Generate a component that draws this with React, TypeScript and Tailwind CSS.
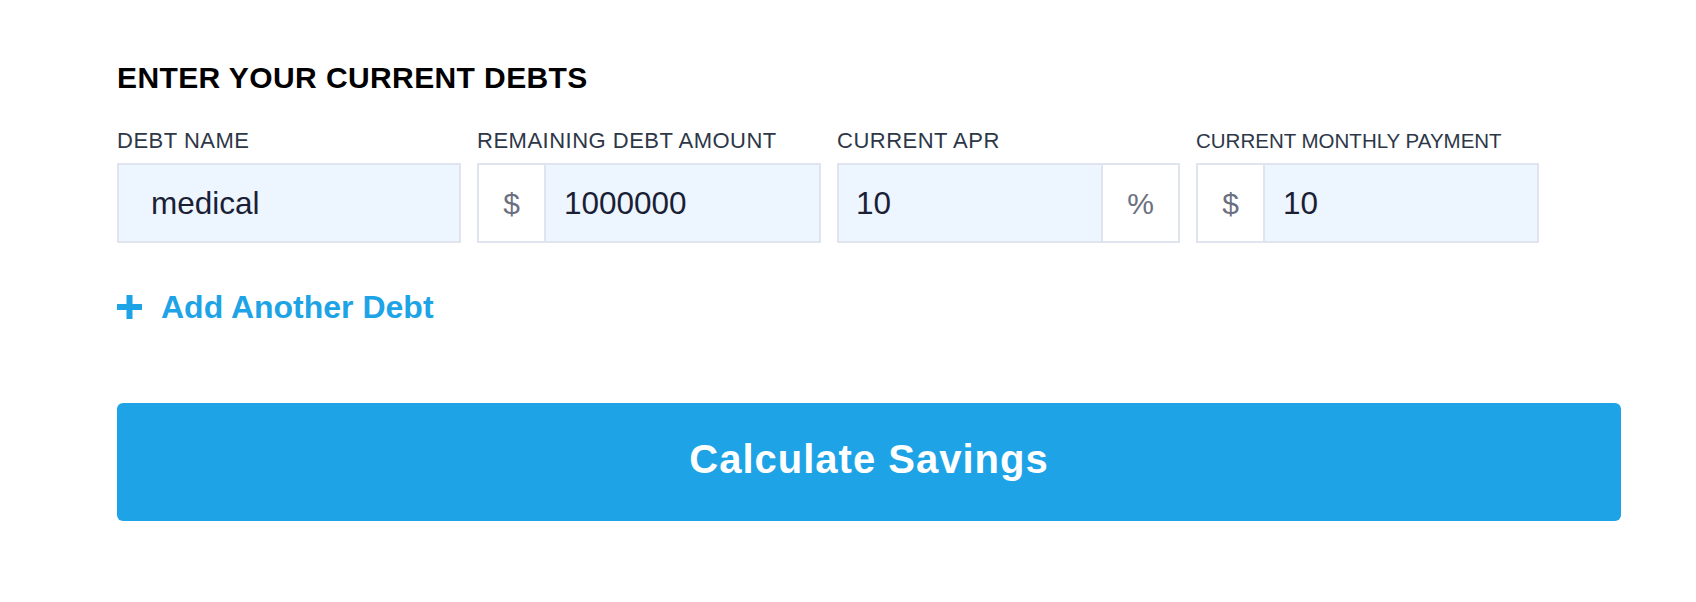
import React from "react";

const font = { fontFamily: '"Liberation Sans", Arial, Helvetica, sans-serif' };

function Label({ children, narrow }: { children: React.ReactNode; narrow?: boolean }) {
  return (
    <div
      className={
        narrow
          ? "h-[22px] flex items-center text-[20.5px] leading-none text-[#2d3748] whitespace-nowrap"
          : "h-[22px] text-[22px] leading-none tracking-[0.5px] text-[#2d3748] whitespace-nowrap"
      }
    >
      {children}
    </div>
  );
}

function Box({ children }: { children: React.ReactNode }) {
  return (
    <div className="mt-[11px] h-[80px] border-2 border-[#dfe4ef] flex bg-white">{children}</div>
  );
}

function Field({ value, pad }: { value: string; pad: string }) {
  return (
    <input
      defaultValue={value}
      className={`flex-1 min-w-0 h-full bg-[#edf5ff] text-[31.5px] text-[#1a1f36] outline-none ${pad}`}
      style={font}
    />
  );
}

export default function App() {
  return (
    <div className="min-h-screen bg-white pl-[117px] pt-[63px]" style={font}>
      <h2 className="text-[30px] leading-none font-bold tracking-[0.4px] text-black">
        ENTER YOUR CURRENT DEBTS
      </h2>

      <div className="mt-[37px] flex gap-4">
        <div className="w-[344px]">
          <Label>DEBT NAME</Label>
          <Box>
            <Field value="medical" pad="pl-[32px]" />
          </Box>
        </div>

        <div className="w-[344px]">
          <Label>REMAINING DEBT AMOUNT</Label>
          <Box>
            <div className="w-[67px] border-r-2 border-[#dfe4ef] flex items-center justify-center text-[30px] text-[#6b7080]">
              $
            </div>
            <Field value="1000000" pad="pl-[18px]" />
          </Box>
        </div>

        <div className="w-[343px]">
          <Label>CURRENT APR</Label>
          <Box>
            <Field value="10" pad="pl-[17px]" />
            <div className="w-[77px] border-l-2 border-[#dfe4ef] flex items-center justify-center text-[30px] text-[#6b7080]">
              %
            </div>
          </Box>
        </div>

        <div className="w-[343px]">
          <Label narrow>CURRENT MONTHLY PAYMENT</Label>
          <Box>
            <div className="w-[67px] border-r-2 border-[#dfe4ef] flex items-center justify-center text-[30px] text-[#6b7080]">
              $
            </div>
            <Field value="10" pad="pl-[18px]" />
          </Box>
        </div>
      </div>

      {/* add row */}
      <button className="mt-[48px] flex items-center gap-[19px] text-[#1ea4e6] cursor-pointer">
        <svg width="25" height="24" viewBox="0 0 25 24" className="shrink-0">
          <rect x="0" y="9" width="25" height="6" fill="currentColor" />
          <rect x="9.5" y="0" width="6" height="24" fill="currentColor" />
        </svg>
        <span className="text-[32px] leading-none font-bold">Add Another Debt</span>
      </button>

      <button className="mt-[80px] w-[1504px] h-[118px] pb-[6px] rounded-md bg-[#1ea4e6] text-white text-[40px] font-bold tracking-[1px] flex items-center justify-center">
        Calculate Savings
      </button>
    </div>
  );
}
